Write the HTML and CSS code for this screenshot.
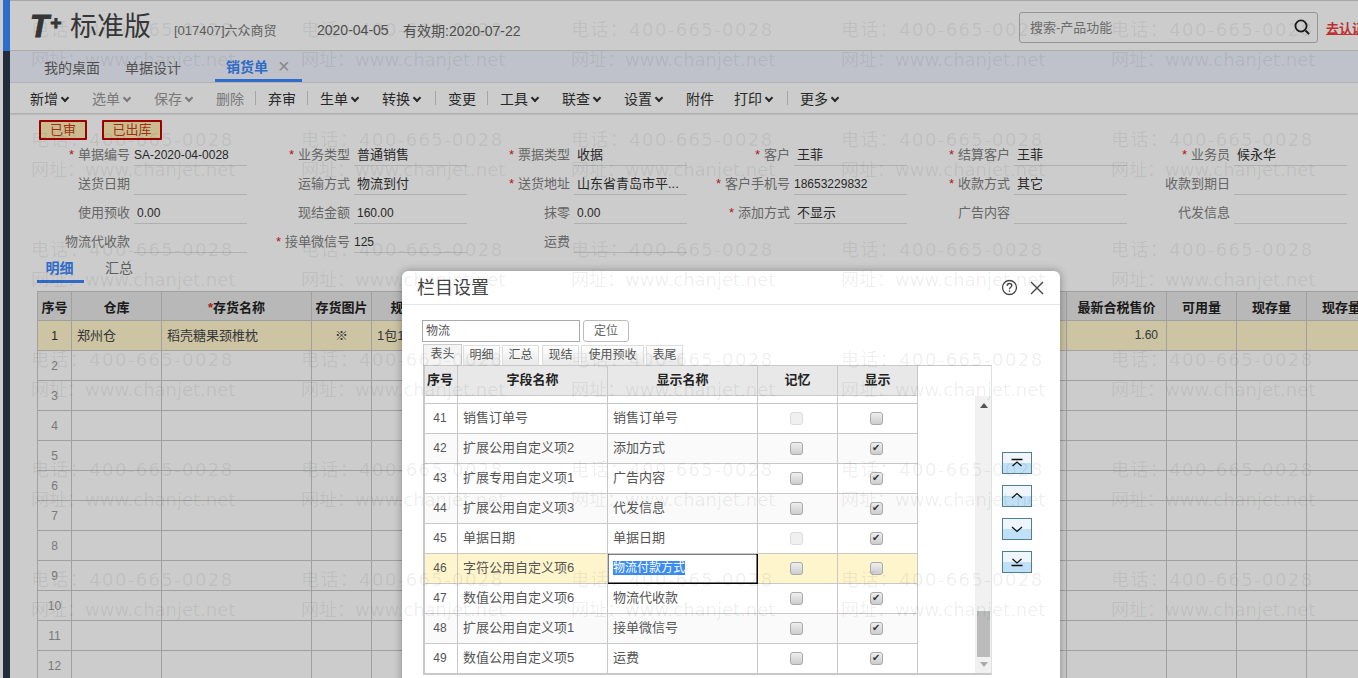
FILE: index.html
```html
<!DOCTYPE html>
<html lang="zh-CN">
<head>
    <meta charset="UTF-8">
    <title>T+ 标准版 - 销货单</title>
    <link rel="stylesheet" href="styles.css">
</head>
<body>
<div class="app">
    <div class="sidebar"><div class="sidebar-top"></div></div>
    <div class="main">
        <div class="header">
            <div class="logo"><span class="logo-mark">T<sup>+</sup></span><span class="logo-name">标准版</span></div>
            <span class="account">[017407]六众商贸</span>
            <span class="date">2020-04-05</span>
            <span class="expire">有效期:2020-07-22</span>
            <div class="search">
                <span>搜索-产品功能</span>
                <svg width="18" height="18" viewBox="0 0 18 18" fill="none" stroke="#222"><circle cx="8" cy="8" r="5.6" stroke-width="1.8"/><path d="M12.5 12.5l3.5 3.5" stroke-width="2"/></svg>
            </div>
            <a class="verify" href="#">去认证</a>
        </div>
        <div class="tabs">
            <span class="tab">我的桌面</span>
            <span class="tab">单据设计</span>
            <span class="tab tab-active">销货单<i class="tab-close">×</i></span>
        </div>
        <div class="toolbar">
            <span class="tb-item more">新增</span>
            <span class="tb-item more off">选单</span>
            <span class="tb-item more off">保存</span>
            <span class="tb-item off">删除</span>
            <i class="tb-sep"></i>
            <span class="tb-item">弃审</span>
            <i class="tb-sep"></i>
            <span class="tb-item more">生单</span>
            <span class="tb-item more">转换</span>
            <i class="tb-sep"></i>
            <span class="tb-item">变更</span>
            <i class="tb-sep"></i>
            <span class="tb-item more">工具</span>
            <span class="tb-item more">联查</span>
            <span class="tb-item more">设置</span>
            <span class="tb-item tb-tight">附件</span>
            <span class="tb-item more">打印</span>
            <i class="tb-sep"></i>
            <span class="tb-item more">更多</span>
        </div>
        <div class="stamps">
            <span class="stamp">已审</span>
            <span class="stamp stamp-wide">已出库</span>
        </div>
        <div class="form">
            <div class="field"><label class="req">单据编号</label><span class="val latin">SA-2020-04-0028</span></div>
            <div class="field"><label class="req">业务类型</label><span class="val">普通销售</span></div>
            <div class="field"><label class="req">票据类型</label><span class="val">收据</span></div>
            <div class="field"><label class="req">客户</label><span class="val">王菲</span></div>
            <div class="field"><label class="req">结算客户</label><span class="val">王菲</span></div>
            <div class="field"><label class="req">业务员</label><span class="val">候永华</span></div>

            <div class="field"><label>送货日期</label><span class="val"></span></div>
            <div class="field"><label>运输方式</label><span class="val">物流到付</span></div>
            <div class="field"><label class="req">送货地址</label><span class="val">山东省青岛市平...</span></div>
            <div class="field"><label class="req">客户手机号</label><span class="val latin">18653229832</span></div>
            <div class="field"><label class="req">收款方式</label><span class="val">其它</span></div>
            <div class="field"><label>收款到期日</label><span class="val"></span></div>

            <div class="field"><label>使用预收</label><span class="val num">0.00</span></div>
            <div class="field"><label>现结金额</label><span class="val num">160.00</span></div>
            <div class="field"><label>抹零</label><span class="val num">0.00</span></div>
            <div class="field"><label class="req">添加方式</label><span class="val">不显示</span></div>
            <div class="field"><label>广告内容</label><span class="val"></span></div>
            <div class="field"><label>代发信息</label><span class="val"></span></div>

            <div class="field"><label>物流代收款</label><span class="val"></span></div>
            <div class="field"><label class="req">接单微信号</label><span class="val latin">125</span></div>
            <div class="field"><label>运费</label><span class="val"></span></div>
        </div>
        <div class="subtabs">
            <span class="subtab subtab-active">明细</span>
            <span class="subtab">汇总</span>
        </div>
        <table class="grid">
            <colgroup>
                <col class="c-no"><col class="c-wh"><col class="c-name"><col class="c-pic"><col class="c-spec"><col class="c-hidden">
                <col class="c-price"><col class="c-qty"><col class="c-qty"><col class="c-qty">
            </colgroup>
            <thead>
                <tr><th>序号</th><th>仓库</th><th><em>*</em>存货名称</th><th>存货图片</th><th>规格型号</th><th></th><th>最新合税售价</th><th>可用量</th><th>现存量</th><th>现存量</th></tr>
            </thead>
            <tbody>
                <tr class="row-on"><td class="no">1</td><td>郑州仓</td><td>稻壳糖果颈椎枕</td><td class="mid">※</td><td>1包12个</td><td></td><td class="right">1.60</td><td></td><td></td><td></td></tr>
                <tr><td class="no">2</td><td></td><td></td><td></td><td></td><td></td><td></td><td></td><td></td><td></td></tr>
                <tr><td class="no">3</td><td></td><td></td><td></td><td></td><td></td><td></td><td></td><td></td><td></td></tr>
                <tr><td class="no">4</td><td></td><td></td><td></td><td></td><td></td><td></td><td></td><td></td><td></td></tr>
                <tr><td class="no">5</td><td></td><td></td><td></td><td></td><td></td><td></td><td></td><td></td><td></td></tr>
                <tr><td class="no">6</td><td></td><td></td><td></td><td></td><td></td><td></td><td></td><td></td><td></td></tr>
                <tr><td class="no">7</td><td></td><td></td><td></td><td></td><td></td><td></td><td></td><td></td><td></td></tr>
                <tr><td class="no">8</td><td></td><td></td><td></td><td></td><td></td><td></td><td></td><td></td><td></td></tr>
                <tr><td class="no">9</td><td></td><td></td><td></td><td></td><td></td><td></td><td></td><td></td><td></td></tr>
                <tr><td class="no">10</td><td></td><td></td><td></td><td></td><td></td><td></td><td></td><td></td><td></td></tr>
                <tr><td class="no">11</td><td></td><td></td><td></td><td></td><td></td><td></td><td></td><td></td><td></td></tr>
                <tr><td class="no">12</td><td></td><td></td><td></td><td></td><td></td><td></td><td></td><td></td><td></td></tr>
            </tbody>
        </table>
    </div>

    <div class="mask"></div>

    <div class="dialog">
        <div class="dialog-head">
            <span class="dialog-title">栏目设置</span>
            <svg class="dialog-help" width="17" height="17" viewBox="0 0 17 17" fill="none" stroke="#444" stroke-width="1.3"><circle cx="8.5" cy="8.5" r="7"/><path d="M6.2 6.8c0-1.500 1-2.300 2.300-2.300s2.300.9 2.300 2.100c0 1.800-2.300 1.700-2.300 3.600"/><path d="M8.500 11.400v1.400"/></svg>
            <svg width="14" height="14" viewBox="0 0 14 14" stroke="#444" stroke-width="1.4"><path d="M1 1l12 12M13 1L1 13"/></svg>
        </div>
        <div class="dialog-body">
            <div class="locate">
                <span class="locate-input">物流</span>
                <span class="locate-btn">定位</span>
            </div>
            <div class="sheet-tabs">
                <span class="sheet sheet-on">表头</span>
                <span class="sheet">明细</span>
                <span class="sheet">汇总</span>
                <span class="sheet sheet-gap">现结</span>
                <span class="sheet sheet-long">使用预收</span>
                <span class="sheet">表尾</span>
            </div>
            <div class="columns">
                <div class="columns-box">
                    <table class="fields">
                        <colgroup><col class="f-no"><col class="f-name"><col class="f-name"><col class="f-check"><col class="f-check"></colgroup>
                        <thead>
                            <tr><th>序号</th><th>字段名称</th><th>显示名称</th><th>记忆</th><th>显示</th></tr>
                        </thead>
                        <tbody>
                            <tr class="stub"><td></td><td></td><td></td><td></td><td></td></tr>
                            <tr><td class="no">41</td><td>销售订单号</td><td>销售订单号</td><td class="mid"><i class="cb cb-off"></i></td><td class="mid"><i class="cb"></i></td></tr>
                            <tr class="alt"><td class="no">42</td><td>扩展公用自定义项2</td><td>添加方式</td><td class="mid"><i class="cb"></i></td><td class="mid"><i class="cb cb-on"></i></td></tr>
                            <tr><td class="no">43</td><td>扩展专用自定义项1</td><td>广告内容</td><td class="mid"><i class="cb"></i></td><td class="mid"><i class="cb cb-on"></i></td></tr>
                            <tr class="alt"><td class="no">44</td><td>扩展公用自定义项3</td><td>代发信息</td><td class="mid"><i class="cb"></i></td><td class="mid"><i class="cb cb-on"></i></td></tr>
                            <tr><td class="no">45</td><td>单据日期</td><td>单据日期</td><td class="mid"><i class="cb cb-off"></i></td><td class="mid"><i class="cb cb-on"></i></td></tr>
                            <tr class="picked"><td class="no">46</td><td>字符公用自定义项6</td><td class="editing"><span class="selected">物流付款方式</span></td><td class="mid"><i class="cb"></i></td><td class="mid"><i class="cb"></i></td></tr>
                            <tr><td class="no">47</td><td>数值公用自定义项6</td><td>物流代收款</td><td class="mid"><i class="cb"></i></td><td class="mid"><i class="cb cb-on"></i></td></tr>
                            <tr class="alt"><td class="no">48</td><td>扩展公用自定义项1</td><td>接单微信号</td><td class="mid"><i class="cb"></i></td><td class="mid"><i class="cb cb-on"></i></td></tr>
                            <tr><td class="no">49</td><td>数值公用自定义项5</td><td>运费</td><td class="mid"><i class="cb"></i></td><td class="mid"><i class="cb cb-on"></i></td></tr>
                        </tbody>
                    </table>
                    <div class="scroll">
                        <i class="scroll-up"></i>
                        <i class="scroll-thumb"></i>
                        <i class="scroll-down"></i>
                    </div>
                </div>
                <div class="movers">
                    <span class="mover"><svg width="12" height="10" viewBox="0 0 12 10" fill="none" stroke="#111" stroke-width="1.300"><path d="M.5 1.500h11M1.500 8L6 4l4.500 4"/></svg></span>
                    <span class="mover"><svg width="12" height="10" viewBox="0 0 12 10" fill="none" stroke="#111" stroke-width="1.300"><path d="M1 7l5-4.500L11 7"/></svg></span>
                    <span class="mover"><svg width="12" height="10" viewBox="0 0 12 10" fill="none" stroke="#111" stroke-width="1.300"><path d="M1 3l5 4.500L11 3"/></svg></span>
                    <span class="mover"><svg width="12" height="10" viewBox="0 0 12 10" fill="none" stroke="#111" stroke-width="1.300"><path d="M1.500 2L6 6l4.500-4M.5 8.500h11"/></svg></span>
                </div>
            </div>
        </div>
    </div>

    <div class="watermark">
        <div><span>电话：400-665-0028</span><span>网址：www.chanjet.net</span></div>
        <div><span>电话：400-665-0028</span><span>网址：www.chanjet.net</span></div>
        <div><span>电话：400-665-0028</span><span>网址：www.chanjet.net</span></div>
        <div><span>电话：400-665-0028</span><span>网址：www.chanjet.net</span></div>
        <div><span>电话：400-665-0028</span><span>网址：www.chanjet.net</span></div>
        <div><span>电话：400-665-0028</span><span>网址：www.chanjet.net</span></div>
        <div><span>电话：400-665-0028</span><span>网址：www.chanjet.net</span></div>
        <div><span>电话：400-665-0028</span><span>网址：www.chanjet.net</span></div>
        <div><span>电话：400-665-0028</span><span>网址：www.chanjet.net</span></div>
        <div><span>电话：400-665-0028</span><span>网址：www.chanjet.net</span></div>
        <div><span>电话：400-665-0028</span><span>网址：www.chanjet.net</span></div>
        <div><span>电话：400-665-0028</span><span>网址：www.chanjet.net</span></div>
        <div><span>电话：400-665-0028</span><span>网址：www.chanjet.net</span></div>
        <div><span>电话：400-665-0028</span><span>网址：www.chanjet.net</span></div>
        <div><span>电话：400-665-0028</span><span>网址：www.chanjet.net</span></div>
        <div><span>电话：400-665-0028</span><span>网址：www.chanjet.net</span></div>
        <div><span>电话：400-665-0028</span><span>网址：www.chanjet.net</span></div>
        <div><span>电话：400-665-0028</span><span>网址：www.chanjet.net</span></div>
        <div><span>电话：400-665-0028</span><span>网址：www.chanjet.net</span></div>
        <div><span>电话：400-665-0028</span><span>网址：www.chanjet.net</span></div>
        <div><span>电话：400-665-0028</span><span>网址：www.chanjet.net</span></div>
        <div><span>电话：400-665-0028</span><span>网址：www.chanjet.net</span></div>
        <div><span>电话：400-665-0028</span><span>网址：www.chanjet.net</span></div>
        <div><span>电话：400-665-0028</span><span>网址：www.chanjet.net</span></div>
        <div><span>电话：400-665-0028</span><span>网址：www.chanjet.net</span></div>
        <div><span>电话：400-665-0028</span><span>网址：www.chanjet.net</span></div>
        <div><span>电话：400-665-0028</span><span>网址：www.chanjet.net</span></div>
        <div><span>电话：400-665-0028</span><span>网址：www.chanjet.net</span></div>
        <div><span>电话：400-665-0028</span><span>网址：www.chanjet.net</span></div>
        <div><span>电话：400-665-0028</span><span>网址：www.chanjet.net</span></div>
    </div>
</div>
</body>
</html>
```

FILE: styles.css
```css
html, body {
    margin: 0;
    height: 100%;
    overflow: hidden;
    background: #fff;
}

body {
    font-family: "Liberation Sans", "Noto Sans CJK SC", sans-serif;
    font-size: 13px;
    color: #333;
}

.app {
    position: relative;
    display: flex;
    width: 1358px;
    height: 678px;
    padding-left: 3px;
    box-sizing: border-box;
    overflow: hidden;
}

.sidebar {
    flex: 0 0 7px;
    background: #2c3749;
}

.sidebar-top {
    height: 51px;
    background: #3a88ff;
}

.main {
    flex: 1;
    min-width: 0;
    overflow: hidden;
}

/* header */
.header {
    display: flex;
    align-items: center;
    height: 50px;
    border-top: 1px solid #d0d0d0;
    box-sizing: border-box;
    padding-left: 20px;
}

.header > * {
    flex: none;
}

.logo {
    display: flex;
    align-items: center;
    width: 144px;
    margin-top: 3px;
    color: #444;
}

.logo-mark {
    width: 40px;
    font: italic bold 31px/34px "Liberation Sans", sans-serif;
    -webkit-text-stroke: 1px #444;
}

.logo-mark sup {
    font-size: 19px;
    line-height: 0;
    vertical-align: 8px;
    margin-left: 1px;
}

.logo-name {
    font-size: 27px;
    line-height: 34px;
}

.account {
    width: 143px;
    margin-top: 8px;
    color: #777;
}

.date {
    width: 86px;
    margin-top: 8px;
    color: #666;
    font-size: 14px;
}

.expire {
    width: 616px;
    margin-top: 8px;
    color: #666;
    font-size: 14px;
}

.search {
    display: flex;
    align-items: center;
    justify-content: space-between;
    width: 299px;
    height: 31px;
    margin-top: 3px;
    box-sizing: border-box;
    padding: 0 6px 0 10px;
    border: 1px solid #bbb;
    border-radius: 3px;
    color: #888;
}

.search span {
    padding-bottom: 2px;
}

.verify {
    margin-left: 8px;
    margin-top: 3px;
    font-size: 13px;
    font-weight: bold;
    color: #f03a3a;
    white-space: nowrap;
}

/* tabs */
.tabs {
    display: flex;
    align-items: center;
    height: 33px;
    border-top: 1px solid #d8d8d8;
    border-bottom: 1px solid #e2e2e2;
    box-sizing: border-box;
    background: #eff3fd;
}

.tab {
    position: relative;
    display: flex;
    align-items: center;
    height: 100%;
    padding: 1px 12px 0;
    box-sizing: border-box;
    margin-left: 22px;
    margin-right: -13px;
    font-size: 14px;
    color: #666;
}

.tab:nth-child(2) {
    margin-left: 14px;
}

.tab-active {
    margin-left: 35px;
    padding: 1px 12px 0 11px;
    width: 87px;
    font-weight: bold;
    color: #3b86fa;
    border-bottom: 3px solid #3b86fa;
}

.tab-close {
    margin-left: 10px;
    font-style: normal;
    font-weight: normal;
    font-size: 20px;
    line-height: 20px;
    color: #aaa;
}

/* toolbar */
.toolbar {
    display: flex;
    align-items: center;
    height: 31px;
    padding-left: 20px;
    box-sizing: border-box;
    font-size: 14px;
    color: #333;
    border-bottom: 1px solid #ddd;
    box-shadow: 0 1px 1px rgba(0,0,0,0.08);
}

.tb-item {
    margin-right: 22px;
    white-space: nowrap;
}

.tb-tight {
    margin-right: 20px;
}

.off {
    color: #999;
}

.more::after {
    content: "";
    display: inline-block;
    width: 4px;
    height: 4px;
    margin: 0 2px 3px 4px;
    border-right: 2px solid currentColor;
    border-bottom: 2px solid currentColor;
    transform: rotate(45deg);
}

.tb-sep {
    width: 1px;
    height: 14px;
    margin: 0 12px 0 -11px;
    background: #ccc;
}

.more + .tb-sep {
    margin-left: -9px;
}

/* status stamps */
.stamps {
    display: flex;
    gap: 15px;
    padding: 6px 0 0 29px;
    height: 20px;
}

.stamp {
    width: 48px;
    height: 20px;
    box-sizing: border-box;
    border: 2px solid #c40000;
    background: #ffedb5;
    color: #c83c14;
    text-align: center;
    line-height: 16px;
    font-size: 13px;
    border-radius: 1px;
}

.stamp-wide {
    width: 60px;
}

/* form */
.form {
    display: grid;
    grid-template-columns: repeat(6, 220px);
    grid-auto-rows: 29px;
    padding-left: 17px;
    margin-top: -3px;
}

.field {
    display: flex;
    gap: 4px;
}

.field label {
    flex: 0 0 103px;
    padding-top: 7px;
    line-height: 22px;
    text-align: right;
    color: #808080;
    white-space: nowrap;
}

.req::before {
    content: "*";
    margin-right: 4px;
    color: #d22;
}

.val {
    flex: 0 0 113px;
    padding: 7px 0 0 3px;
    line-height: 22px;
    border-bottom: 1px solid #dcdcdc;
    box-sizing: border-box;
    color: #333;
    white-space: nowrap;
    overflow: hidden;
}

.latin {
    padding-left: 0;
    font-size: 12px;
}

.num {
    font-size: 12px;
}

/* detail tabs */
.subtabs {
    display: flex;
    gap: 18px;
    margin: 2px 0 8px 27px;
    height: 28px;
}

.subtab {
    padding: 3px 3px 0;
    font-size: 14px;
    line-height: 20px;
    color: #777;
}

.subtab-active {
    padding: 3px 10px 0 8px;
    box-sizing: border-box;
    width: 47px;
    text-align: center;
    font-weight: bold;
    color: #3b86fa;
    border-bottom: 3px solid #3b86fa;
}

/* main grid */
.grid {
    table-layout: fixed;
    width: 1339px;
    margin-left: 27px;
    border-collapse: collapse;
}

.c-no { width: 34px; }
.c-wh { width: 90px; }
.c-name { width: 150px; }
.c-pic { width: 60px; }
.c-spec { width: 90px; }
.c-hidden { width: 605px; }
.c-price { width: 100px; }
.c-qty { width: 70px; }

.grid th, .grid td {
    height: 30px;
    padding: 0 5px 2px;
    box-sizing: border-box;
    border: 1px solid #c8c8c8;
    white-space: nowrap;
    overflow: hidden;
}

.grid th {
    height: 29px;
    background: #e6e6e6;
    color: #222;
    font-size: 13px;
    padding: 0;
}

.grid th em {
    color: #d22;
    font-style: normal;
}

.row-on td {
    background: #fff5cc;
    color: #444;
}

.no {
    text-align: center;
    color: #555;
}

.grid td.no {
    padding: 0;
    font-size: 12px;
    color: #999;
}

.grid .row-on td.no {
    color: #333;
}

.mid {
    text-align: center;
}

.right {
    text-align: right;
    font-size: 12px;
}

.grid td.right {
    padding-right: 8px;
}

/* dim layer */
.mask {
    position: absolute;
    inset: 0;
    background: rgba(0,0,0,0.2);
}

/* dialog */
.dialog {
    position: absolute;
    left: 402px;
    top: 271px;
    width: 658px;
    height: 440px;
    background: #fff;
    border-radius: 6px;
    box-shadow: 0 0 8px rgba(0,0,0,0.35);
}

.dialog-head {
    display: flex;
    align-items: center;
    height: 33px;
    padding: 0 16px 0 15px;
    border-bottom: 1px solid #e5e5e5;
}

.dialog-title {
    flex: 1;
    padding-bottom: 3px;
    font-size: 18px;
    color: #444;
}

.dialog-help {
    margin-right: 12px;
}

.dialog-body {
    padding: 15px 20px 0;
}

.locate {
    display: flex;
    gap: 3px;
    height: 22px;
}

.locate-input {
    width: 158px;
    box-sizing: border-box;
    padding-left: 3px;
    border: 1px solid #aaa;
    font-size: 12px;
    line-height: 20px;
    color: #555;
}

.locate-btn {
    width: 46px;
    box-sizing: border-box;
    border: 1px solid #bbb;
    border-radius: 3px;
    font-size: 12px;
    line-height: 20px;
    text-align: center;
    color: #666;
}

.sheet-tabs {
    display: flex;
    gap: 2px;
    height: 21px;
    margin: 2px 0 0 1px;
    align-items: flex-end;
}

.sheet {
    width: 37px;
    height: 20px;
    box-sizing: border-box;
    border: 1px solid #ddd;
    border-bottom: 0;
    background: linear-gradient(#fff, #e8e8e8);
    font-size: 12px;
    line-height: 18px;
    text-align: center;
    color: #555;
}

.sheet-on {
    width: 39px;
    height: 21px;
    margin-right: -1px;
    background: #f4f4f4;
    border-color: #ccc;
}

.sheet-gap {
    margin-left: 1px;
}

.sheet-long {
    width: 63px;
}

.columns {
    display: flex;
    margin-left: 1px;
}

.columns-box {
    display: flex;
    width: 569px;
    height: 310px;
    box-sizing: border-box;
    border: 2px solid #c8c8c8;
    border-right: 1px solid #e0e0e0;
    border-top-width: 1px;
    overflow: hidden;
}

.fields {
    table-layout: fixed;
    width: 495px;
    flex: none;
    align-self: flex-start;
    border-collapse: collapse;
    margin-left: -3px;
}

.f-no { width: 35px; }
.f-name { width: 150px; }
.f-check { width: 80px; }

.fields th, .fields td {
    height: 30px;
    padding: 0 5px 4px;
    box-sizing: border-box;
    border: 1px solid #c8c8c8;
    white-space: nowrap;
    overflow: hidden;
    color: #555;
}

.fields thead th {
    height: 29px;
    border-top: 0;
    background: #e8e8e8;
    color: #222;
    padding: 0 0 4px;
}

.fields .stub td {
    height: 8px;
    padding: 0;
}

.fields td.no {
    padding: 0 0 1px;
    font-size: 12px;
}

.fields td.mid {
    padding: 0 2px 1px 0;
}

.alt td {
    background: #fafafa;
}

.picked td {
    background: #fff5cc;
}

.fields .editing {
    background: #fff;
    border: 1px solid #000;
    box-shadow: inset 0 0 0 0.5px #000;
}

.selected {
    background: #3a8cf0;
    color: #fff;
    font-size: 12px;
}

.cb {
    display: inline-block;
    position: relative;
    width: 11px;
    height: 11px;
    vertical-align: middle;
    border: 1px solid #aaa;
    border-radius: 3px;
    background: linear-gradient(#eee, #ccc);
}

.cb-off {
    border-color: #ddd;
    background: #f0f0f0;
}

.cb-on::after {
    content: "✔";
    position: absolute;
    left: 1px;
    top: -2px;
    font: 10px/14px "DejaVu Sans", sans-serif;
    color: #333;
}

.scroll {
    display: flex;
    flex-direction: column;
    align-items: center;
    flex: none;
    width: 17px;
    height: 278px;
    margin: 30px 0 0 57px;
    background: #f1f1f1;
}

.scroll-up, .scroll-down {
    width: 0;
    height: 0;
    border-left: 4px solid transparent;
    border-right: 4px solid transparent;
}

.scroll-up {
    margin-top: 7px;
    border-bottom: 5px solid #555;
}

.scroll-thumb {
    width: 13px;
    height: 46px;
    margin-top: 203px;
    background: #bbb;
}

.scroll-down {
    margin-top: 5px;
    border-top: 5px solid #aaa;
}

.movers {
    display: flex;
    flex-direction: column;
    gap: 11px;
    margin: 87px 0 0 10px;
}

.mover {
    display: flex;
    align-items: center;
    justify-content: center;
    width: 30px;
    height: 22px;
    box-sizing: border-box;
    border: 1px solid #4f7f90;
    background: linear-gradient(#eef6fb 50%, #bfe0f6 50%);
}

/* watermark repeats over everything */
.watermark {
    position: absolute;
    left: 31px;
    top: 15px;
    display: grid;
    grid-template-columns: repeat(5, 270px);
    grid-auto-rows: 110px;
    pointer-events: none;
    font-family: "DejaVu Sans", "Noto Sans CJK SC", sans-serif;
    font-size: 18px;
    color: rgba(0,0,0,0.07);
}

.watermark span {
    display: block;
    line-height: 30px;
    white-space: nowrap;
}

.watermark span:first-child {
    letter-spacing: 1.4px;
}
```
